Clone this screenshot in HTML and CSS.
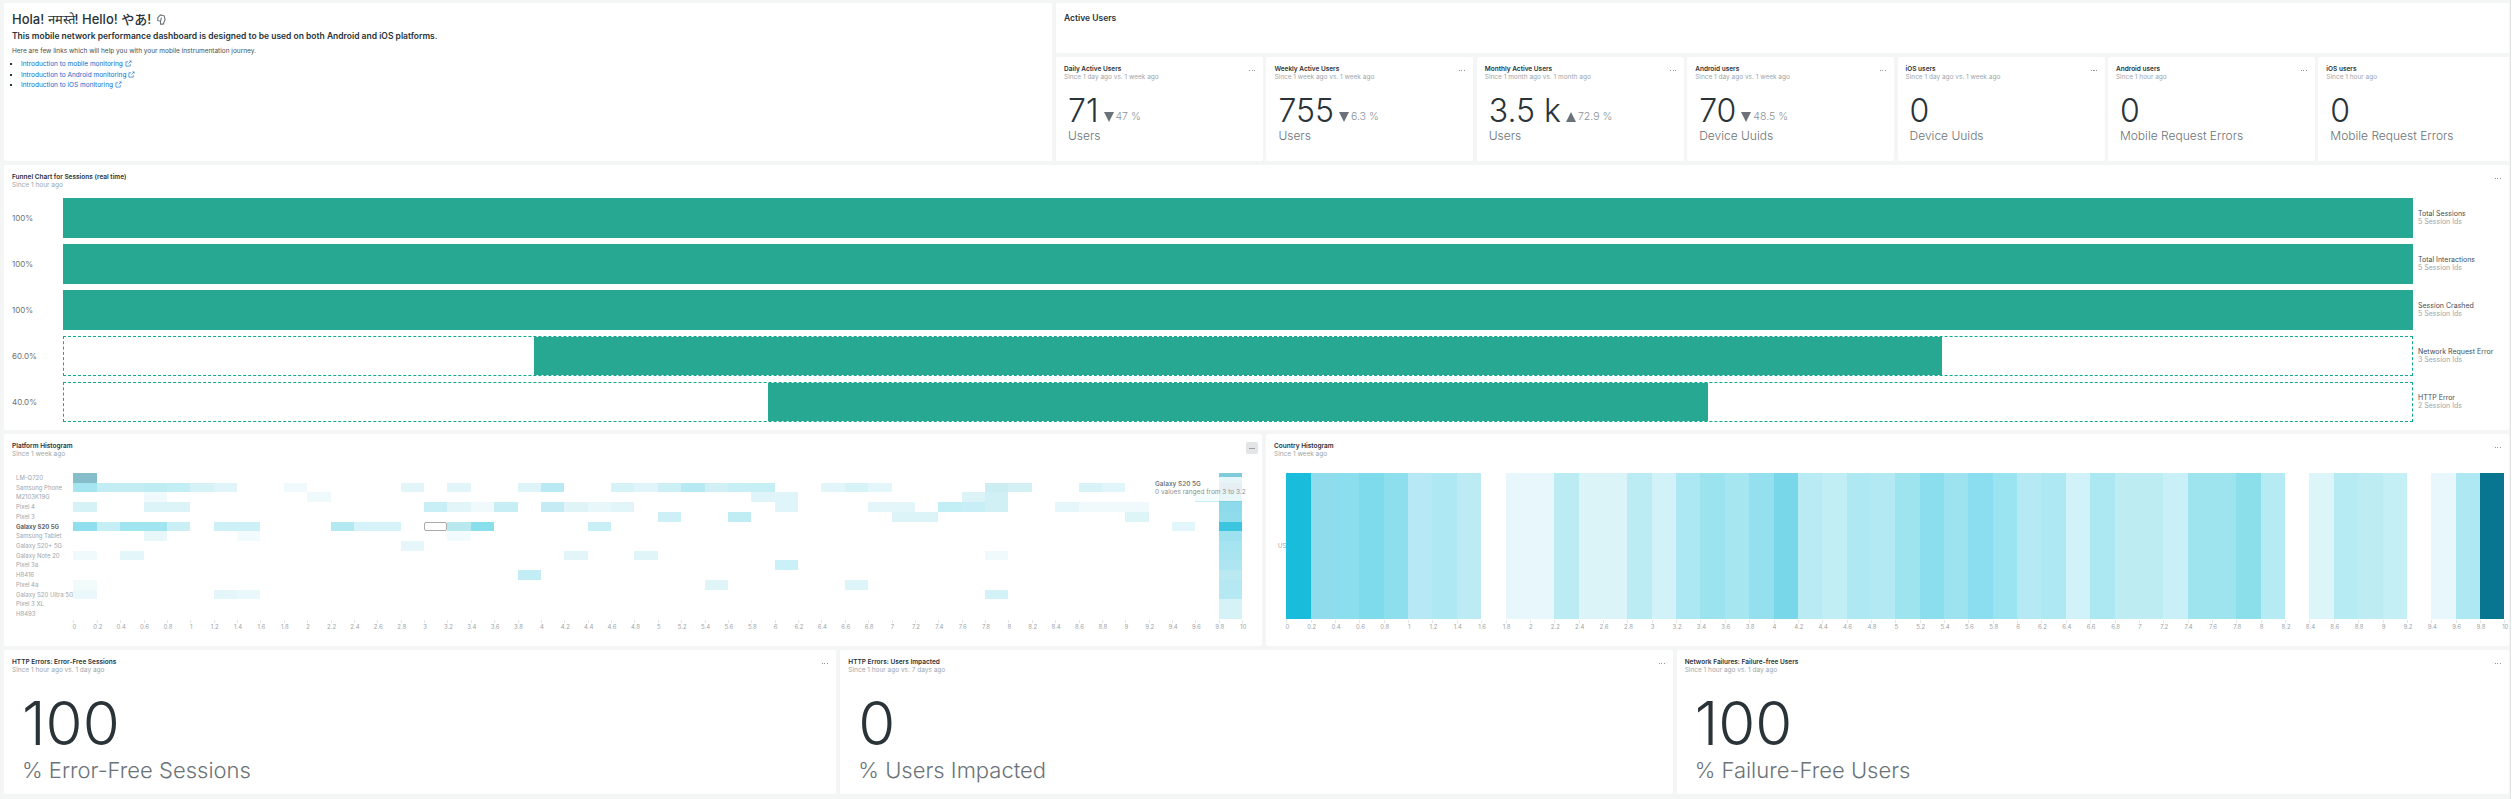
FILE: index.html
```html
<!DOCTYPE html>
<html lang="en">
<head>
    <meta charset="UTF-8">
    <meta name="viewport" content="width=device-width, initial-scale=1.0">
    <title>Mobile Network Performance</title>
    <link rel="stylesheet" href="styles.css">
</head>
<body>
    <div class="page">
        <main class="dashboard">
            <section class="top-row">
                <div class="card intro">
                    <h1>Hola! नमस्ते! Hello! やあ!
                        <svg class="wave" viewBox="0 0 12 12"><path d="M3 4 L6 1 L10 2 L11 6 L9 11 L6 11 L6 8 L3 7 Z M6 8 L7 4" fill="none" stroke="#6b7378" stroke-width="1.2"/></svg>
                    </h1>
                    <h2>This mobile network performance dashboard is designed to be used on both Android and iOS platforms.</h2>
                    <p>Here are few links which will help you with your mobile instrumentation journey.</p>
                    <ul>
                        <li><a href="#">Introduction to mobile monitoring</a> <svg class="ext" viewBox="0 0 8 8"><path d="M6 4.5 V7 H1 V2 H3.5 M4 4 L7 1 M5 1 H7 V3" fill="none" stroke="#0b6acb" stroke-width=".7"/></svg></li>
                        <li><a href="#">Introduction to Android monitoring</a> <svg class="ext" viewBox="0 0 8 8"><path d="M6 4.5 V7 H1 V2 H3.5 M4 4 L7 1 M5 1 H7 V3" fill="none" stroke="#0b6acb" stroke-width=".7"/></svg></li>
                        <li><a href="#">Introduction to iOS monitoring</a> <svg class="ext" viewBox="0 0 8 8"><path d="M6 4.5 V7 H1 V2 H3.5 M4 4 L7 1 M5 1 H7 V3" fill="none" stroke="#0b6acb" stroke-width=".7"/></svg></li>
                    </ul>
                </div>
                <div class="active">
                    <div class="card active-title">Active Users</div>
                    <div class="billboards">
                        <div class="card billboard">
                            <div class="head"><div class="title">Daily Active Users</div><div class="sub">Since 1 day ago vs. 1 week ago</div><span class="menu"></span></div>
                            <div class="value">71<span class="tri down"></span><span class="pct">47 %</span></div>
                            <div class="unit">Users</div>
                        </div>
                        <div class="card billboard">
                            <div class="head"><div class="title">Weekly Active Users</div><div class="sub">Since 1 week ago vs. 1 week ago</div><span class="menu"></span></div>
                            <div class="value">755<span class="tri down"></span><span class="pct">6.3 %</span></div>
                            <div class="unit">Users</div>
                        </div>
                        <div class="card billboard">
                            <div class="head"><div class="title">Monthly Active Users</div><div class="sub">Since 1 month ago vs. 1 month ago</div><span class="menu"></span></div>
                            <div class="value">3.5 k<span class="tri up"></span><span class="pct">72.9 %</span></div>
                            <div class="unit">Users</div>
                        </div>
                        <div class="card billboard">
                            <div class="head"><div class="title">Android users</div><div class="sub">Since 1 day ago vs. 1 week ago</div><span class="menu"></span></div>
                            <div class="value">70<span class="tri down"></span><span class="pct">48.5 %</span></div>
                            <div class="unit">Device Uuids</div>
                        </div>
                        <div class="card billboard">
                            <div class="head"><div class="title">iOS users</div><div class="sub">Since 1 day ago vs. 1 week ago</div><span class="menu"></span></div>
                            <div class="value">0</div>
                            <div class="unit">Device Uuids</div>
                        </div>
                        <div class="card billboard">
                            <div class="head"><div class="title">Android users</div><div class="sub">Since 1 hour ago</div><span class="menu"></span></div>
                            <div class="value">0</div>
                            <div class="unit">Mobile Request Errors</div>
                        </div>
                        <div class="card billboard">
                            <div class="head"><div class="title">iOS users</div><div class="sub">Since 1 hour ago</div><span class="menu"></span></div>
                            <div class="value">0</div>
                            <div class="unit">Mobile Request Errors</div>
                        </div>
                    </div>
                </div>
            </section>

            <section class="card funnel-card">
                <div class="head"><div class="title">Funnel Chart for Sessions (real time)</div><div class="sub">Since 1 hour ago</div><span class="menu"></span></div>
                <div class="funnel">
                    <div class="step"><span class="rate">100%</span><div class="track"><div class="bar" style="width:100%"></div></div><div class="step-name"><b>Total Sessions</b><span>5 Session Ids</span></div></div>
                    <div class="step"><span class="rate">100%</span><div class="track"><div class="bar" style="width:100%"></div></div><div class="step-name"><b>Total Interactions</b><span>5 Session Ids</span></div></div>
                    <div class="step"><span class="rate">100%</span><div class="track"><div class="bar" style="width:100%"></div></div><div class="step-name"><b>Session Crashed</b><span>5 Session Ids</span></div></div>
                    <div class="step"><span class="rate">60.0%</span><div class="track dashed"><div class="bar" style="width:60%"></div></div><div class="step-name"><b>Network Request Error</b><span>3 Session Ids</span></div></div>
                    <div class="step"><span class="rate">40.0%</span><div class="track dashed"><div class="bar" style="width:40%"></div></div><div class="step-name"><b>HTTP Error</b><span>2 Session Ids</span></div></div>
                </div>
            </section>

            <section class="histogram-row">
                <div class="card platform-card">
                    <div class="head"><div class="title">Platform Histogram</div><div class="sub">Since 1 week ago</div><span class="menu active-menu"></span></div>
                    <div class="heat">
                        <div class="heat-labels" id="platformLabels"></div>
                        <div>
                            <div class="heat-plot" id="platformPlot"></div>
                            <div class="axis" id="platformAxis"></div>
                        </div>
                    </div>
                    <div class="tooltip">
                        <b>Galaxy S20 5G</b>
                        <span>0 values ranged from 3 to 3.2</span>
                    </div>
                </div>
                <div class="card country-card">
                    <div class="head"><div class="title">Country Histogram</div><div class="sub">Since 1 week ago</div><span class="menu"></span></div>
                    <div class="heat">
                        <div class="heat-labels country-label">US</div>
                        <div>
                            <div class="heat-plot wide" id="countryPlot"></div>
                            <div class="axis wide" id="countryAxis"></div>
                        </div>
                    </div>
                </div>
            </section>

            <section class="bottom-row">
                <div class="card big">
                    <div class="head"><div class="title">HTTP Errors: Error-Free Sessions</div><div class="sub">Since 1 hour ago vs. 1 day ago</div><span class="menu"></span></div>
                    <div class="big-value">100</div>
                    <div class="big-unit">% Error-Free Sessions</div>
                </div>
                <div class="card big">
                    <div class="head"><div class="title">HTTP Errors: Users Impacted</div><div class="sub">Since 1 hour ago vs. 7 days ago</div><span class="menu"></span></div>
                    <div class="big-value">0</div>
                    <div class="big-unit">% Users Impacted</div>
                </div>
                <div class="card big">
                    <div class="head"><div class="title">Network Failures: Failure-free Users</div><div class="sub">Since 1 hour ago vs. 1 day ago</div><span class="menu"></span></div>
                    <div class="big-value">100</div>
                    <div class="big-unit">% Failure-Free Users</div>
                </div>
            </section>
        </main>
        <div class="scrollbar"></div>
    </div>
    <script src="charts.js"></script>
</body>
</html>
```

FILE: styles.css
```css
* {
    box-sizing: border-box;
}
body {
    margin: 0;
    font-family: Inter, "Noto Sans CJK JP", sans-serif;
    background: #f4f5f5;
    color: #293338;
    overflow: hidden;
}
.page {
    display: flex;
    height: 799px;
}
.dashboard {
    width: 2510px;
    padding: 3px 1px 0 4px;
    display: flex;
    flex-direction: column;
    gap: 4px;
}
.scrollbar {
    width: 4px;
    background: #fff;
    border-left: 1px solid #e0e2e3;
}
.card {
    background: #fff;
    border-radius: 2px;
    overflow: hidden;
    position: relative;
}

/* top */
.top-row {
    display: flex;
    gap: 4px;
    height: 158px;
}
.intro {
    width: 1048px;
    padding: 10px 8px;
}
.intro h1 {
    margin: 0;
    font-size: 13px;
    font-weight: 500;
    line-height: 13px;
}
.wave {
    width: 11px;
    height: 11px;
    vertical-align: -1px;
}
.intro h2 {
    margin: 5px 0 0;
    font-size: 8.5px;
    font-weight: 600;
    line-height: 10px;
}
.intro p {
    margin: 6px 0 0;
    font-size: 6.5px;
    line-height: 8px;
    color: #464e53;
}
.intro ul {
    margin: 4px 0 0;
    padding-left: 9px;
    list-style: square;
    font-size: 6.5px;
    line-height: 10.5px;
}
.intro a {
    color: #0b6acb;
    text-decoration: none;
}
.ext {
    width: 7px;
    height: 7px;
    vertical-align: -1px;
}
.active {
    flex: 1;
    min-width: 0;
    display: flex;
    flex-direction: column;
    gap: 4px;
}
.active-title {
    height: 50px;
    padding: 11px 8px;
    font-size: 8.5px;
    font-weight: 600;
    line-height: 9px;
}
.billboards {
    display: flex;
    gap: 3.4px;
    height: 104px;
    overflow: hidden;
}
.billboard {
    flex: 0 0 207px;
}

/* shared card header */
.head {
    padding: 8px 8px 0;
    height: 24px;
    position: relative;
}
.title {
    font-size: 6.5px;
    font-weight: 600;
    line-height: 8px;
    color: #293338;
    white-space: nowrap;
}
.sub {
    font-size: 6.5px;
    line-height: 8px;
    color: #9ea5a9;
    white-space: nowrap;
}
.menu {
    position: absolute;
    top: 13px;
    right: 8px;
    width: 6px;
    height: 1px;
    background: repeating-linear-gradient(to right, #8e9494 0 1px, transparent 1px 2.5px);
}
.active-menu {
    top: 8px;
    right: 4px;
    width: 12px;
    height: 12px;
    background: #e3e5e6;
    border-radius: 2px;
}
.active-menu::after {
    content: "";
    display: block;
    margin: 5.5px 3px 0;
    height: 1.5px;
    background: #9a9fa2;
}

/* billboards */
.value {
    display: flex;
    align-items: flex-end;
    margin: 14px 0 0 12px;
    font-size: 32px;
    font-weight: 300;
    line-height: 32px;
    white-space: nowrap;
}
.tri {
    width: 0;
    height: 0;
    margin: 0 2px 5px 5px;
    border-left: 5.5px solid transparent;
    border-right: 5.5px solid transparent;
}
.tri.down {
    border-top: 10px solid #6b7378;
}
.tri.up {
    border-bottom: 10px solid #6b7378;
}
.pct {
    margin-bottom: 3px;
    font-size: 10.5px;
    line-height: 14px;
    color: #8a9196;
}
.unit {
    margin: 2px 0 0 12px;
    font-size: 12px;
    font-weight: 300;
    line-height: 14px;
    color: #6b7378;
    white-space: nowrap;
}

/* funnel */
.funnel-card {
    height: 265px;
}
.funnel {
    margin-top: 9px;
    display: flex;
    flex-direction: column;
    gap: 6px;
}
.step {
    display: flex;
    align-items: center;
    height: 40px;
}
.rate {
    width: 59px;
    padding-left: 8px;
    font-size: 8px;
    color: #6b7378;
}
.track {
    width: 2350px;
    height: 100%;
    display: flex;
    justify-content: center;
    align-items: stretch;
}
.track.dashed {
    border: 1px dashed #12a88f;
}
.bar {
    background: #26a893;
}
.step-name {
    margin-left: 5px;
    display: flex;
    flex-direction: column;
    font-size: 7px;
    line-height: 8.5px;
    white-space: nowrap;
}
.step-name b {
    font-weight: 400;
    color: #464e53;
}
.step-name span {
    color: #9ea5a9;
}

/* histograms */
.histogram-row {
    display: flex;
    gap: 4px;
    height: 212px;
}
.platform-card {
    width: 1258px;
}
.country-card {
    flex: 1;
    min-width: 0;
}
.heat {
    display: flex;
    margin-top: 15px;
}
.heat-labels {
    width: 77px;
    padding-left: 12px;
    font-size: 6px;
    color: #9ea5a9;
}
.heat-labels div {
    height: 9.73px;
    line-height: 9.73px;
    white-space: nowrap;
}
.heat-labels .picked {
    font-weight: 700;
    color: #5f676c;
}
.country-label {
    width: 28px;
    padding-left: 12px;
    height: 146px;
    line-height: 146px;
}
.heat-plot {
    display: grid;
    grid-template-columns: repeat(50, 23.38px);
    grid-template-rows: repeat(15, 9.73px);
    width: 1169px;
}
.heat-plot.wide {
    grid-template-columns: repeat(50, 24.37px);
    grid-template-rows: 146px;
    width: 1218.5px;
}
.cell.selected {
    background: #fff;
    border: 1px solid #aaa;
    border-radius: 2px;
}
.axis {
    display: flex;
    height: 12px;
}
.tick {
    flex: 0 0 23.38px;
    font-size: 6px;
    line-height: 8px;
    color: #a0a5a8;
    text-align: center;
    border-left: 1px solid #e3e5e6;
    height: 3px;
    margin-top: 1px;
}
.axis.wide .tick {
    flex-basis: 24.37px;
}
.tick span {
    display: block;
    width: 20px;
    margin: 3px 0 0 -10px;
}
.tooltip {
    position: absolute;
    left: 1147px;
    top: 43px;
    width: 92px;
    height: 24px;
    padding: 3px 4px;
    background: rgba(255, 255, 255, 0.8);
    font-size: 6.5px;
    line-height: 8px;
    color: #8a9196;
    white-space: nowrap;
}
.tooltip b {
    display: block;
    font-weight: 500;
    color: #5f676c;
}

/* bottom */
.bottom-row {
    display: flex;
    gap: 4px;
    height: 144px;
}
.big {
    flex: 1;
    min-width: 0;
}
.big-value {
    margin: 19px 0 0 18px;
    font-size: 60px;
    font-weight: 300;
    line-height: 60px;
}
.big-unit {
    margin: 4px 0 0 18px;
    font-size: 22px;
    font-weight: 300;
    line-height: 26px;
    color: #6b7378;
}
```

FILE: charts.js
```js
const platforms = ["LM-Q720", "Samsung Phone", "M2103K19G", "Pixel 4", "Pixel 3", "Galaxy S20 5G", "Samsung Tablet", "Galaxy S20+ 5G", "Galaxy Note 20", "Pixel 3a", "H8416", "Pixel 4a", "Galaxy S20 Ultra 5G", "Pixel 3 XL", "H8493"];

// row: [column, colour] pairs
const platformCells = [
    [[0, "#85bdca"], [49, "#7fcbdb"]],
    [[0, "#a5e5f2"], [1, "#c3ecf5"], [2, "#c3ecf5"], [3, "#bdecf3"], [4, "#c3eef5"], [5, "#d5f2f7"], [6, "#e0f5f9"], [9, "#f0fafc"], [14, "#e2f5f9"], [16, "#e2f5f9"], [19, "#def4f8"], [20, "#b9e9f3"], [23, "#d5f2f7"], [24, "#e0f5f9"], [25, "#cdf0f6"], [26, "#b7e9f2"], [27, "#d0f0f5"], [28, "#c8eff6"], [29, "#c5eef5"], [32, "#e2f6fa"], [33, "#d6f3f7"], [34, "#e3f6fa"], [39, "#ccedf2"], [40, "#d3f1f5"], [43, "#d8f3f7"], [44, "#e0f6fa"], [49, "#82b6c5"]],
    [[3, "#f0fafc"], [10, "#f0fafc"], [29, "#e0f5f9"], [30, "#e0f5f9"], [38, "#dcf4f8"], [39, "#d0f0f5"], [48, "#c8eef6"], [49, "#82cfe0"]],
    [[0, "#d5f2f7"], [3, "#dcf4f8"], [4, "#dcf4f8"], [15, "#c8eff6"], [16, "#e2f5f9"], [17, "#f0fafc"], [18, "#c8eef5"], [20, "#c5ecf4"], [21, "#e0f4f8"], [22, "#e8f7fa"], [23, "#e2f5f9"], [30, "#e0f5f9"], [34, "#e5f6fa"], [35, "#e3f7fb"], [37, "#c2eef5"], [38, "#c8eef6"], [39, "#d0f0f5"], [42, "#e6f7fb"], [43, "#f0fafc"], [44, "#f0fafc"], [45, "#f0fafc"], [49, "#8ddbea"]],
    [[25, "#cdeff6"], [28, "#c0ecf3"], [35, "#dcf4f8"], [36, "#dcf4f8"], [45, "#def5f8"], [49, "#91dcea"]],
    [[0, "#8fdfee"], [1, "#c6eef5"], [2, "#a0e5f0"], [3, "#a0e5f0"], [4, "#caf0f6"], [6, "#cef1f7"], [7, "#cef1f7"], [11, "#b5e9f2"], [12, "#d5f3f8"], [13, "#d5f3f8"], [15, "selected"], [16, "#b9e8ef"], [17, "#8adfed"], [22, "#c8eff6"], [47, "#e3f6fa"], [49, "#3cc5de"]],
    [[3, "#e8f7fa"], [7, "#f2fbfd"], [16, "#f2fbfd"], [49, "#9fe2ef"]],
    [[14, "#e6f6fa"], [49, "#a5e4f0"]],
    [[0, "#f0fafc"], [2, "#e3f6fa"], [21, "#e2f5f9"], [24, "#dff5f8"], [39, "#f0fafc"], [49, "#a9e5f1"]],
    [[30, "#caf0f8"], [49, "#ade6f2"]],
    [[19, "#c3edf4"], [49, "#bbe9f1"]],
    [[0, "#f2fbfb"], [27, "#e0f5f8"], [33, "#ddf5f8"], [49, "#b5e8f2"]],
    [[0, "#eaf7fb"], [6, "#e3f6fa"], [7, "#e8f8fb"], [39, "#d3f2f7"], [49, "#b5e8f2"]],
    [[49, "#d5f2f7"]],
    [[49, "#d5f2f7"]]
];

// one colour per column, "" is an empty bucket
const countryCells = ["#1abcdc", "#8fdcec", "#8adeee", "#7edbec", "#8ddfed", "#b6e9f5", "#aee8f3", "#bdebf3", "", "#e8f7fc", "#e8f7fc", "#bbebf3", "#dbf4f8", "#dbf4f8", "#bbebf3", "#d2f2f9", "#abe8f3", "#9be3ef", "#a6e6f1", "#95e0ee", "#78d8ea", "#b8ebf3", "#c1eef5", "#ade8f3", "#b2e9f3", "#9de4ef", "#8adeed", "#9de3ef", "#8adeef", "#9ae4f1", "#b5eaf4", "#aee8f2", "#d0f2f8", "#ace8f2", "#bdecf3", "#bdecf3", "#c9f0f6", "#9de4ef", "#9de4ef", "#8bdfeb", "#b6ebf3", "", "#dbf5f9", "#b6ebf3", "#bdecf3", "#c3eff5", "", "#e8f7fc", "#aee8f2", "#087591"];

function addCell(plot, row, col, colour) {
    const cell = document.createElement("div");
    cell.className = "cell";
    cell.style.gridRow = row + 1;
    cell.style.gridColumn = col + 1;
    if (colour === "selected") {
        cell.classList.add("selected");
    } else {
        cell.style.background = colour;
    }
    plot.appendChild(cell);
}

function buildAxis(axis) {
    for (let i = 0; i <= 50; i++) {
        const tick = document.createElement("div");
        tick.className = "tick";
        const label = document.createElement("span");
        label.innerText = String(Math.round(i * 2) / 10);
        tick.appendChild(label);
        axis.appendChild(tick);
    }
}

const labelBox = document.getElementById("platformLabels");
platforms.forEach((name) => {
    const item = document.createElement("div");
    item.innerText = name;
    if (name === "Galaxy S20 5G") {
        item.className = "picked";
    }
    labelBox.appendChild(item);
});

const platformPlot = document.getElementById("platformPlot");
platformCells.forEach((cells, row) => {
    cells.forEach(([col, colour]) => addCell(platformPlot, row, col, colour));
});

const countryPlot = document.getElementById("countryPlot");
countryCells.forEach((colour, col) => {
    if (colour) {
        addCell(countryPlot, 0, col, colour);
    }
});

buildAxis(document.getElementById("platformAxis"));
buildAxis(document.getElementById("countryAxis"));
```
